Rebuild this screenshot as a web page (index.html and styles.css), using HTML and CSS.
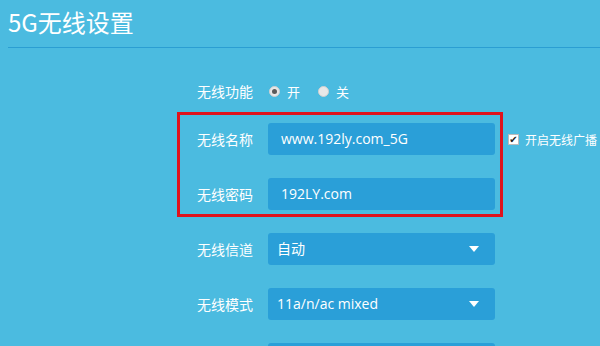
FILE: index.html
```html
<!DOCTYPE html>
<html lang="zh-CN">
<head>
    <meta charset="UTF-8">
    <title>5G无线设置</title>
    <link rel="stylesheet" href="styles.css">
</head>
<body>
    <div class="header">
        <h1 class="title">5G无线设置</h1>
    </div>
    <form class="wifi-form">
        <!-- 无线功能 -->
        <div class="row row-radio">
            <span class="label">无线功能</span>
            <div class="radio-group">
                <label class="radio"><span class="dot checked"></span>开</label>
                <label class="radio"><span class="dot"></span>关</label>
            </div>
        </div>
        <!-- 名称 / 密码 -->
        <div class="row">
            <span class="label">无线名称</span>
            <div class="field">www.192ly.com_5G</div>
            <label class="check"><span class="box">&#10004;</span>开启无线广播</label>
        </div>
        <div class="row">
            <span class="label">无线密码</span>
            <div class="field">192LY.com</div>
        </div>
        <!-- 下拉 -->
        <div class="row">
            <span class="label">无线信道</span>
            <div class="field select">自动<span class="arrow"></span></div>
        </div>
        <div class="row">
            <span class="label">无线模式</span>
            <div class="field select">11a/n/ac mixed<span class="arrow"></span></div>
        </div>
        <div class="row">
            <span class="label"></span>
            <div class="field select"></div>
        </div>
        <div class="highlight"></div>
    </form>
</body>
</html>
```
FILE: styles.css
```css
body {
    margin: 0;
    background: #4bbbe0;
    color: #fff;
    font-family: "Noto Sans CJK SC", "Open Sans", sans-serif;
    overflow: hidden;
    height: 346px;
}
.header {
    padding: 0 0 0 8px;
}
.title {
    margin: 0;
    height: 48px;
    box-sizing: border-box;
    padding-top: 4px;
    font-size: 24px;
    font-weight: normal;
    line-height: 36px;
    border-bottom: 1px solid #2b9ed2;
}
.wifi-form {
    position: relative;
    padding-top: 27px;
}
.row {
    display: flex;
    align-items: center;
    height: 32px;
    margin-bottom: 23px;
}
.row-radio {
    margin-bottom: 16px;
}
.label {
    width: 268px;
    padding-right: 15px;
    box-sizing: border-box;
    text-align: right;
    font-size: 14px;
    flex-shrink: 0;
}
.radio-group {
    display: flex;
    gap: 18px;
    font-size: 13px;
    padding-left: 1px;
}
.radio {
    display: flex;
    align-items: center;
    gap: 7px;
}
.dot {
    width: 11px;
    height: 11px;
    border-radius: 50%;
    background: #e8e8e8;
    box-sizing: border-box;
    border: 1px solid #d0d0d0;
    position: relative;
}
.dot.checked::after {
    content: "";
    position: absolute;
    left: 2px;
    top: 2px;
    width: 5px;
    height: 5px;
    border-radius: 50%;
    background: #5a5a5a;
}
.field {
    width: 227px;
    height: 32px;
    box-sizing: border-box;
    padding-left: 13px;
    background: #2a9fd8;
    border-radius: 3px;
    font-family: "Open Sans", "Noto Sans CJK SC", sans-serif;
    font-size: 14px;
    line-height: 32px;
    flex-shrink: 0;
}
.select {
    position: relative;
    padding-left: 9px;
}
.arrow {
    position: absolute;
    right: 16px;
    top: 13px;
    border-left: 5px solid transparent;
    border-right: 5px solid transparent;
    border-top: 6px solid #fff;
}
.check {
    display: flex;
    align-items: center;
    gap: 6px;
    margin-left: 13px;
    font-size: 12px;
    white-space: nowrap;
}
.box {
    width: 11px;
    height: 11px;
    background: #fff;
    border: 1px solid #bbb;
    box-sizing: border-box;
    color: #222;
    font-size: 10px;
    line-height: 9px;
    text-align: center;
    font-family: "DejaVu Sans", sans-serif;
}
.highlight {
    position: absolute;
    left: 177px;
    top: 64px;
    width: 326px;
    height: 105px;
    box-sizing: border-box;
    border: 3px solid #e0121c;
}
```
